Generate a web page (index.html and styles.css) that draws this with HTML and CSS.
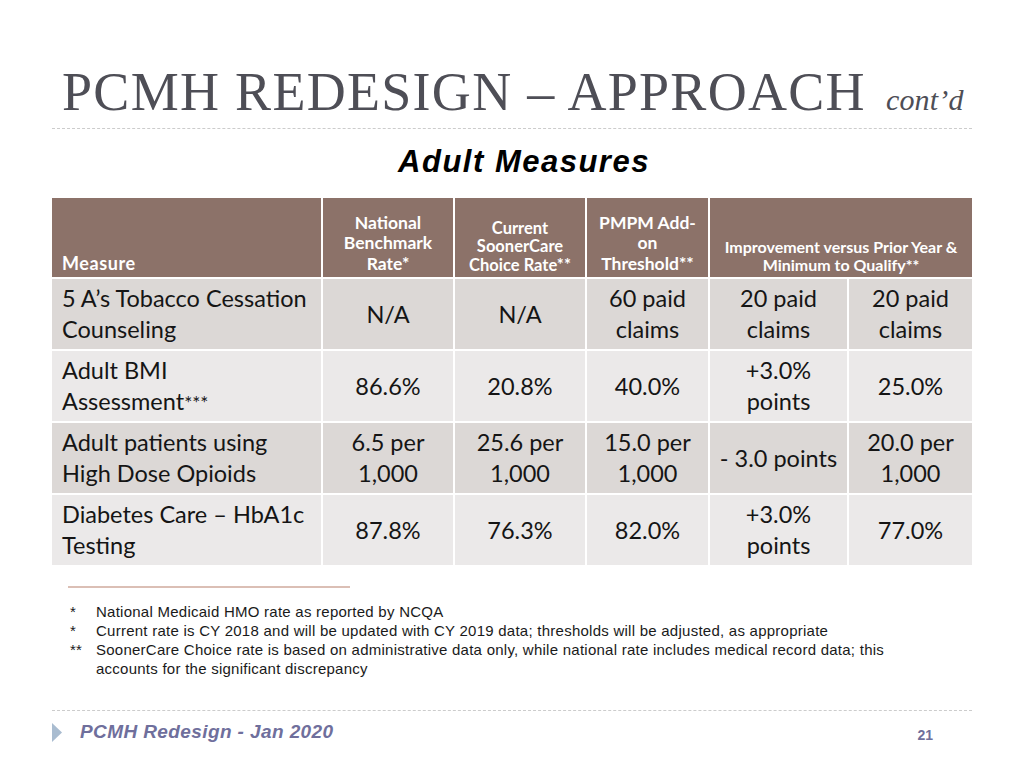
FILE: index.html
```html
<!DOCTYPE html>
<html lang="en">
<head>
<meta charset="utf-8">
<title>PCMH Redesign – Approach cont'd</title>
<link rel="stylesheet" href="styles.css">
</head>
<body>
<div class="slide">
  <header class="title-bar">
    <h1 class="title">PCMH REDESIGN – APPROACH</h1>
    <span class="title-sub">cont’d</span>
  </header>
  <h2 class="subtitle">Adult Measures</h2>

  <div class="measures" role="table">
    <div class="th th-left"><span>Measure</span></div>
    <div class="th"><span>National<br>Benchmark<br>Rate*</span></div>
    <div class="th th-tight"><span>Current<br>SoonerCare<br>Choice Rate**</span></div>
    <div class="th"><span>PMPM Add-<br>on<br>Threshold**</span></div>
    <div class="th th-wide"><span>Improvement versus Prior Year &amp;<br>Minimum to Qualify**</span></div>

    <div class="td td-left odd"><span>5 A’s Tobacco Cessation<br>Counseling</span></div>
    <div class="td odd"><span>N/A</span></div>
    <div class="td odd"><span>N/A</span></div>
    <div class="td odd"><span>60 paid<br>claims</span></div>
    <div class="td odd"><span>20 paid<br>claims</span></div>
    <div class="td odd"><span>20 paid<br>claims</span></div>

    <div class="td td-left even"><span>Adult BMI<br>Assessment<span class="stars">***</span></span></div>
    <div class="td even"><span>86.6%</span></div>
    <div class="td even"><span>20.8%</span></div>
    <div class="td even"><span>40.0%</span></div>
    <div class="td even"><span>+3.0%<br>points</span></div>
    <div class="td even"><span>25.0%</span></div>

    <div class="td td-left odd"><span>Adult patients using<br>High Dose Opioids</span></div>
    <div class="td odd"><span>6.5 per<br>1,000</span></div>
    <div class="td odd"><span>25.6 per<br>1,000</span></div>
    <div class="td odd"><span>15.0 per<br>1,000</span></div>
    <div class="td odd"><span>- 3.0 points</span></div>
    <div class="td odd"><span>20.0 per<br>1,000</span></div>

    <div class="td td-left even"><span>Diabetes Care – HbA1c<br>Testing</span></div>
    <div class="td even"><span>87.8%</span></div>
    <div class="td even"><span>76.3%</span></div>
    <div class="td even"><span>82.0%</span></div>
    <div class="td even"><span>+3.0%<br>points</span></div>
    <div class="td even"><span>77.0%</span></div>
  </div>

  <div class="rule"></div>

  <ul class="notes">
    <li><span class="mark">*</span><span>National Medicaid HMO rate as reported by NCQA</span></li>
    <li><span class="mark">*</span><span>Current rate is CY 2018 and will be updated with CY 2019 data; thresholds will be adjusted, as appropriate</span></li>
    <li><span class="mark">**</span><span>SoonerCare Choice rate is based on administrative data only, while national rate includes medical record data; this accounts for the significant discrepancy</span></li>
  </ul>

  <footer class="footer">
    <div class="footer-left">
      <svg class="arrow" width="10" height="19" viewBox="0 0 10 19" aria-hidden="true"><polygon points="0,0 10,9.5 0,19" fill="#a9bcd0"/></svg>
      <span class="footer-text">PCMH Redesign - Jan 2020</span>
    </div>
    <span class="page-num">21</span>
  </footer>
</div>
</body>
</html>
```

FILE: styles.css
```css
html, body {
  margin: 0;
  padding: 0;
  background: #ffffff;
}

.slide {
  width: 1024px;
  height: 768px;
  box-sizing: border-box;
  padding: 0 52px;
  display: flex;
  flex-direction: column;
  font-family: "Liberation Sans", Arial, sans-serif;
}

.title-bar {
  display: flex;
  align-items: baseline;
  gap: 20px;
  padding: 66px 0 10px 10px;
  border-bottom: 1px dashed #cccccc;
}

.title {
  margin: 0;
  font-family: "Liberation Serif", "Times New Roman", serif;
  font-weight: normal;
  font-size: 54px;
  line-height: 52px;
  color: #4e4e56;
  letter-spacing: 1.3px;
  white-space: nowrap;
}

.title-sub {
  font-family: "Liberation Serif", "Times New Roman", serif;
  font-style: italic;
  font-size: 30px;
  letter-spacing: 0.2px;
  color: #4e4e56;
}

.subtitle {
  margin: 16px 0 0 0;
  padding-left: 24px;
  text-align: center;
  font-family: "Liberation Sans", Arial, sans-serif;
  font-style: italic;
  font-weight: bold;
  font-size: 31px;
  line-height: 34px;
  color: #000;
  letter-spacing: 1.5px;
}

.measures {
  margin-top: 19px;
  display: grid;
  grid-template-columns: 269px 130px 130px 121px 137px 123px;
  grid-template-rows: 79px repeat(4, 70px);
  gap: 2px;
  font-family: Lato, "Open Sans", sans-serif;
}

.th {
  background: #8c7269;
  color: #ffffff;
  font-weight: bold;
  font-size: 17.5px;
  line-height: 20.5px;
  display: flex;
  align-items: flex-end;
  justify-content: center;
  text-align: center;
  padding: 0 4px 3px;
  white-space: nowrap;
}

.th-tight {
  font-size: 16.5px;
  line-height: 18.5px;
  padding-bottom: 3px;
}

.th-left {
  justify-content: flex-start;
  text-align: left;
  padding-left: 10px;
  padding-bottom: 4px;
  font-size: 18px;
  letter-spacing: 0.6px;
}

.th-wide {
  grid-column: span 2;
  font-size: 16px;
  line-height: 18px;
  padding-bottom: 3px;
}

.td {
  display: flex;
  align-items: center;
  justify-content: center;
  text-align: center;
  font-size: 23.5px;
  line-height: 31px;
  color: #151515;
  padding: 0 2px;
  white-space: nowrap;
}

.td-left {
  justify-content: flex-start;
  text-align: left;
  padding-left: 10px;
}

.odd { background: #dcd8d6; }
.even { background: #ebe9e9; }

.stars {
  font-size: 19px;
}

.rule {
  width: 282px;
  height: 2px;
  background: #dbbfb5;
  margin: 21px 0 0 16px;
}

.notes {
  list-style: none;
  margin: 14px 0 0 0;
  padding: 0 80px 0 16px;
  font-size: 15px;
  line-height: 19px;
  letter-spacing: 0.25px;
  color: #1a1a1a;
}

.notes li {
  display: flex;
}

.mark {
  flex: 0 0 28px;
  padding-left: 2px;
  box-sizing: border-box;
}

.footer {
  margin-top: auto;
  margin-bottom: 25px;
  border-top: 1px dashed #cccccc;
  padding-top: 10px;
  display: flex;
  justify-content: space-between;
  align-items: center;
}

.footer-left {
  display: flex;
  align-items: center;
  gap: 18px;
}

.footer-text {
  font-style: italic;
  font-weight: bold;
  font-size: 19px;
  letter-spacing: 0.4px;
  color: #6f6f9c;
}

.page-num {
  font-weight: bold;
  font-size: 14px;
  color: #6f6f9c;
  margin-right: 39px;
  padding-top: 5px;
}
```
